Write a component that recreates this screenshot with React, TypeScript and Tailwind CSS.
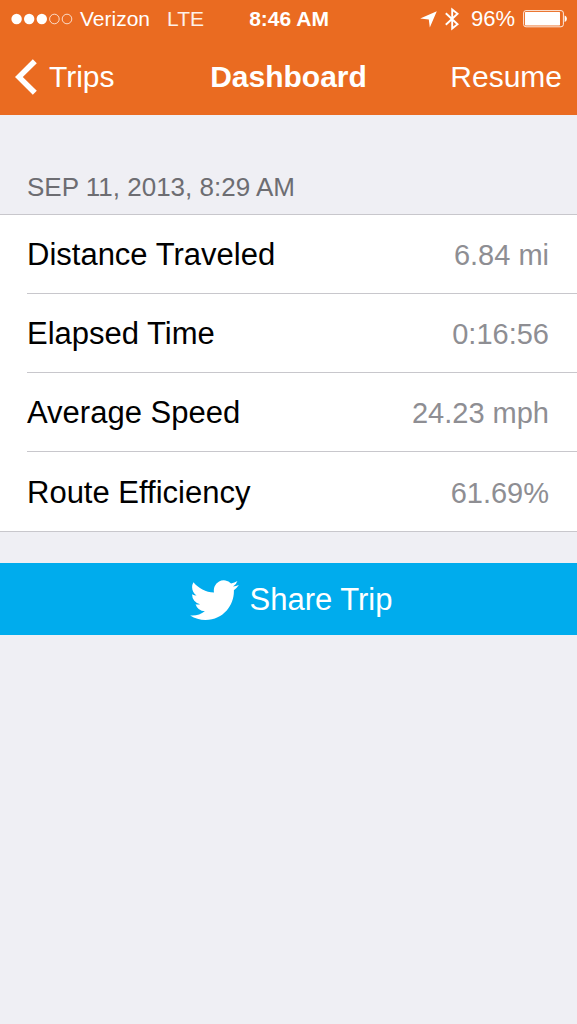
const stats = [
  { label: "Distance Traveled", value: "6.84 mi" },
  { label: "Elapsed Time", value: "0:16:56" },
  { label: "Average Speed", value: "24.23 mph" },
  { label: "Route Efficiency", value: "61.69%" },
];

function SignalDots() {
  return (
    <svg width="62" height="12" viewBox="0 0 62 12" role="img" aria-label="Signal strength 3 of 5">
      <g fill="#fff">
        <circle cx="5.6" cy="6" r="5.2" />
        <circle cx="18.2" cy="6" r="5.2" />
        <circle cx="30.8" cy="6" r="5.2" />
      </g>
      <g fill="none" stroke="#fff" strokeOpacity="0.75" strokeWidth="1">
        <circle cx="43.4" cy="6" r="4.8" />
        <circle cx="56" cy="6" r="4.8" />
      </g>
    </svg>
  );
}

function LocationIcon() {
  return (
    <svg width="17" height="17" viewBox="0 0 17 17" fill="#fff" aria-hidden="true">
      <path d="M16.8.2 9.8 16.6 8.8 8.4.2 7.4z" />
    </svg>
  );
}

function BluetoothIcon() {
  return (
    <svg width="14" height="24" viewBox="0 0 14 24" fill="none" stroke="#fff" strokeWidth="1.9" aria-hidden="true">
      <path d="M.8 6.3 12.6 17.2 7.2 21.6V2.4l5.4 4.4L.8 17.7" />
    </svg>
  );
}

function BatteryIcon() {
  return (
    <svg width="44" height="18" viewBox="0 0 44 18" role="img" aria-label="Battery">
      <rect x="0.6" y="0.6" width="39.8" height="16.2" rx="2.4" fill="none" stroke="#fff" strokeOpacity="0.85" strokeWidth="1" />
      <rect x="2" y="2" width="35" height="13.4" rx="0.6" fill="#fff" />
      <path d="M41.6 5.4c3 .8 3 5.8 0 6.6z" fill="#fff" />
    </svg>
  );
}

function TwitterBird() {
  return (
    <svg width="49" height="40" viewBox="0 2.1 24 19.7" fill="#fff" aria-hidden="true">
      <path d="M23.953 4.57a10 10 0 01-2.825.775 4.958 4.958 0 002.163-2.723c-.951.555-2.005.959-3.127 1.184a4.92 4.92 0 00-8.384 4.482C7.69 8.095 4.067 6.13 1.64 3.162a4.822 4.822 0 00-.666 2.475c0 1.71.87 3.213 2.188 4.096a4.904 4.904 0 01-2.228-.616v.06a4.923 4.923 0 003.946 4.827 4.996 4.996 0 01-2.212.085 4.936 4.936 0 004.604 3.417 9.867 9.867 0 01-6.102 2.105c-.39 0-.779-.023-1.17-.067a13.995 13.995 0 007.557 2.209c9.053 0 13.998-7.496 13.998-13.985 0-.21 0-.42-.015-.63A9.935 9.935 0 0024 4.59z" />
    </svg>
  );
}

export default function App() {
  return (
    <div className="min-h-screen bg-[#efeff4] font-['Liberation_Sans',Arial,sans-serif] text-black">
      <header className="bg-[#ea6b21] text-white">
        <div className="grid h-[38px] grid-cols-[1fr_auto_1fr] items-center pr-2.5 pl-[11px] text-[21px] leading-6">
          <div className="flex items-center gap-[7px]">
            <SignalDots />
            <span>Verizon</span>
            <span className="ml-2.5 text-white/90">LTE</span>
          </div>
          <time className="font-bold">8:46 AM</time>
          <div className="flex items-center justify-end gap-2">
            <LocationIcon />
            <BluetoothIcon />
            <span className="ml-1 text-[22px]">96%</span>
            <BatteryIcon />
          </div>
        </div>
        <nav className="grid h-[77px] grid-cols-[1fr_auto_1fr] items-center px-[15px] text-[30px] leading-9">
          <a href="#trips" className="flex items-center gap-3">
            <svg width="22" height="36" viewBox="0 0 22 36" fill="#fff" aria-hidden="true">
              <path d="M17.8.2 21.8 4.2 7.8 18 21.8 31.8 17.8 35.8 0 18z" />
            </svg>
            Trips
          </a>
          <h1 className="font-bold">Dashboard</h1>
          <button type="button" className="justify-self-end">Resume</button>
        </nav>
      </header>

      <main>
        <h2 className="px-[27px] pt-[58px] pb-3 text-[26px] leading-[29px] text-[#6d6d72]">
          SEP 11, 2013, 8:29 AM
        </h2>
        <dl className="border-y border-[#c8c7cc] bg-white pl-[27px]">
          {stats.map((stat) => (
            <div
              key={stat.label}
              className="flex h-[79px] items-center justify-between border-b border-[#c8c7cc] pt-0.5 pr-7 leading-9 last:border-b-0"
            >
              <dt className="text-[31px]">{stat.label}</dt>
              <dd className="text-[29px] text-[#8e8e93]">{stat.value}</dd>
            </div>
          ))}
        </dl>
        <button
          type="button"
          className="mt-[31px] flex h-[72px] w-full items-center justify-center gap-2.5 bg-[#00aced] pt-0.5 pl-1.5 text-[31px] leading-9 text-white"
        >
          <TwitterBird />
          Share Trip
        </button>
      </main>
    </div>
  );
}
